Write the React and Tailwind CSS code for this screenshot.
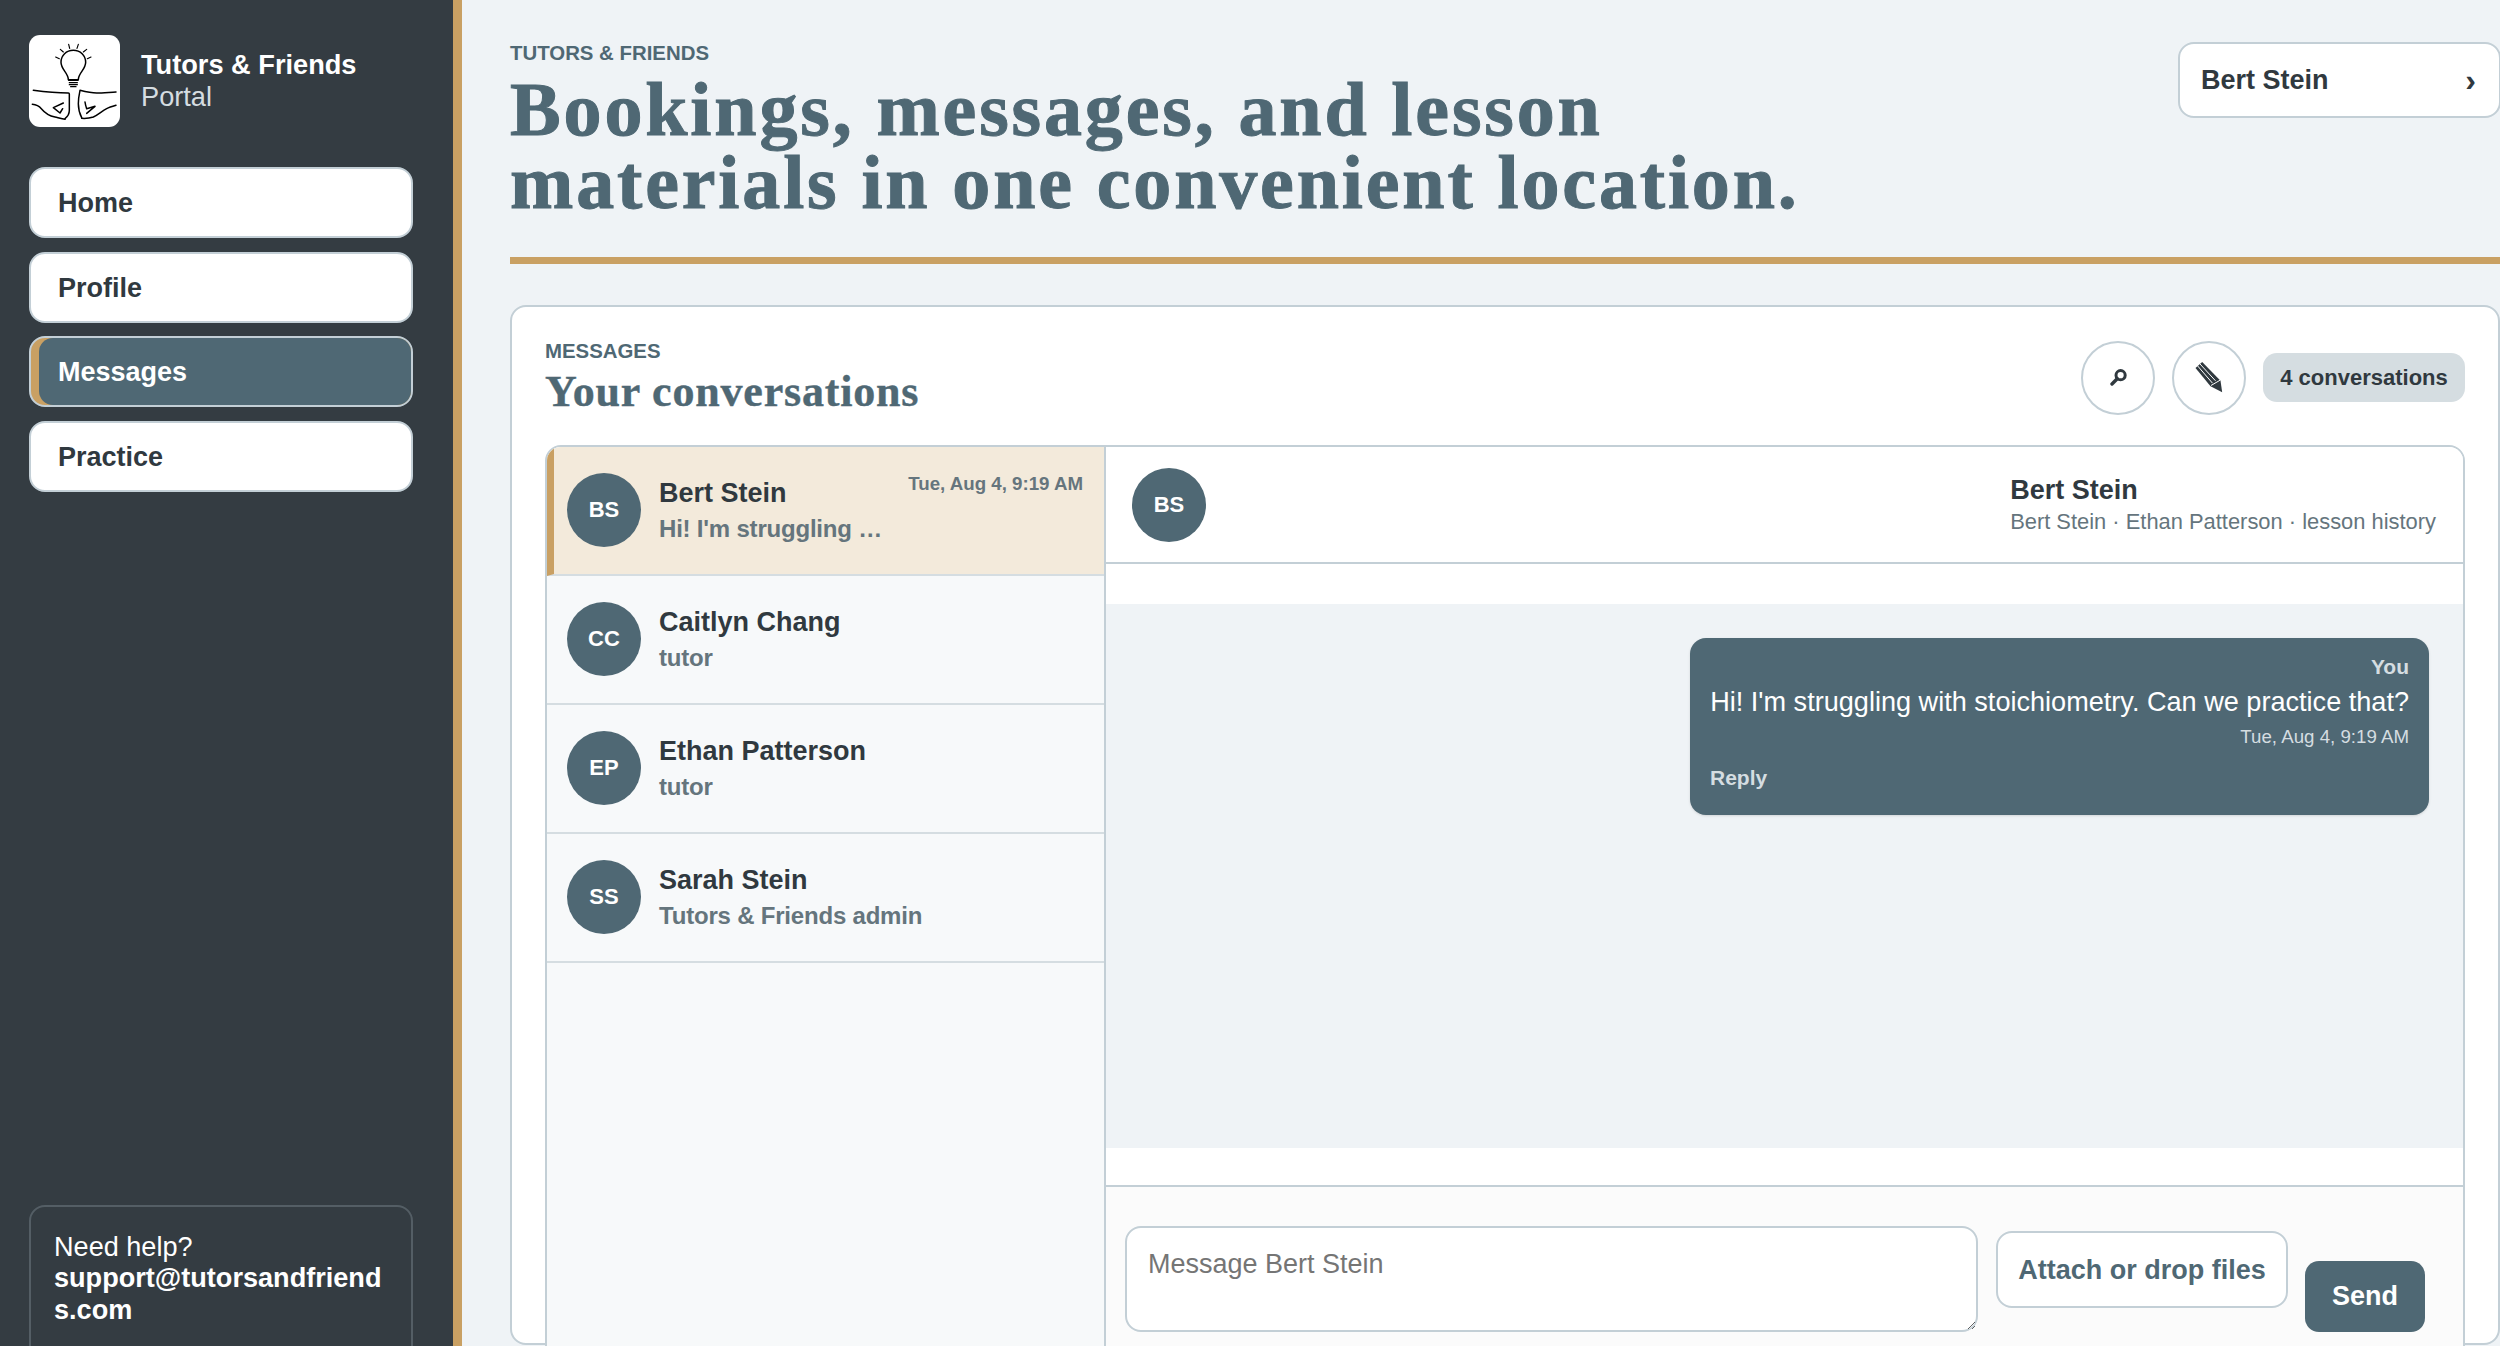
const SANS = "font-['Liberation_Sans',Arial,sans-serif]";

function Logo() {
  return (
    <div className="w-[91px] h-[92px] rounded-[11px] bg-white shrink-0 overflow-hidden">
      <svg viewBox="0 0 273 276" className="w-full h-full" fill="none" stroke="#000" strokeWidth="4.5" strokeLinecap="round" strokeLinejoin="round">
        <path d="M80 66l11 5M94 43l9 8M119 28l3 12M148 28l-4 12M173 43l-10 8M186 66l-11 5" strokeWidth="3.5" />
        <path d="M118 134c0-20-22-30-22-52 0-20 16-36 37-36s37 16 37 36c0 22-22 32-22 52z" />
        <path d="M119 136h28M121 143h24M121 149h24M125 155h16" strokeWidth="4" />
        <path d="M13 166c30 4 70 8 105 8 2 0 3 1 3 3v49c0 10-5 19-13 25" />
        <path d="M10 208c12 1 21 6 27 13 10 12 26 22 41 25 12 3 22 6 30 7" />
        <path d="M103 204L73 218l20 16 8-13" />
        <path d="M261 171c-20 1-42 3-58 3-16 0-34-4-50-8-3 14-5 28-5 40 0 16 4 30 10 42" />
        <path d="M158 250c14 1 26-1 35-4 14-6 26-18 40-25 8-4 18-7 28-10" />
        <path d="M168 201c1 8 3 14 5 20l25-7-25 21" />
      </svg>
    </div>
  );
}

function NavItem({ label, active }) {
  if (active) {
    return (
      <div className="h-[71px] rounded-[16px] border-2 border-[#c3cfd6] bg-[#c9a063] overflow-hidden">
        <div className="h-full ml-[8px] rounded-l-[14px] bg-[#4f6874] flex items-center pl-[19px] pt-[2px] text-[27px] font-bold text-white">{label}</div>
      </div>
    );
  }
  return (
    <div className="h-[71px] rounded-[16px] border-2 border-[#c3cfd6] bg-white flex items-center pl-[27px] pt-[2px] text-[27px] font-bold text-[#30393f]">{label}</div>
  );
}

function Avatar({ text }) {
  return (
    <div className="w-[74px] h-[74px] rounded-full bg-[#4f6874] text-white flex items-center justify-center text-[22px] font-bold shrink-0">{text}</div>
  );
}

function Conv({ initials, name, sub, date, active }) {
  return (
    <div className={`h-[129px] border-b-2 border-[#d5dde1] flex items-center relative ${active ? "bg-[#f3eadb] border-l-[7px] border-l-[#c9a063] pl-[13px]" : "bg-[#f7f9fa] pl-[20px]"} pr-[21px] pb-[2px]`}>
      <Avatar text={initials} />
      <div className="ml-[18px] min-w-0 pt-[3px]">
        <div className="text-[27px] font-bold text-[#30393f] leading-[34px]">{name}</div>
        <div className="text-[24px] font-bold text-[#65757d] leading-[34px] mt-[2px] tracking-[-0.2px]">{sub}</div>
      </div>
      {date && <div className="absolute right-[21px] top-[25px] text-[18.7px] font-bold text-[#65757d] leading-[24px]">{date}</div>}
    </div>
  );
}

function IconCircle({ children }) {
  return (
    <div className="w-[74px] h-[74px] rounded-full border-2 border-[#c3cfd6] bg-white flex items-center justify-center">{children}</div>
  );
}

export default function App() {
  return (
    <div className={`h-[1346px] w-[2500px] overflow-hidden flex bg-[#eff3f6] ${SANS}`}>
      <aside className="w-[462px] h-[1346px] shrink-0 overflow-hidden bg-[#343c42] border-r-[9px] border-r-[#c9a063]">
        <div className="h-[1376px] flex flex-col pl-[29px] pr-[40px] pt-[35px]">
          <div className="flex items-center gap-[21px]">
            <Logo />
            <div className="text-[27.2px] leading-[32px]">
              <div className="font-bold text-white">Tutors &amp; Friends</div>
              <div className="text-[#d5dde1]">Portal</div>
            </div>
          </div>
          <nav className="mt-[40px] flex flex-col gap-[13.5px]">
            <NavItem label="Home" />
            <NavItem label="Profile" />
            <NavItem label="Messages" active />
            <NavItem label="Practice" />
          </nav>
          <div className="mt-auto h-[171px] rounded-[16px] border-2 border-[#545e65] pl-[23px] pr-[18px] pt-[24px] text-[27.1px] leading-[32px] text-white break-all">
            <div>Need help?</div>
            <div className="font-bold -mt-[1px]">support@tutorsandfriends.com</div>
          </div>
        </div>
      </aside>

      <main className="flex-1 min-w-0 pl-[48px] overflow-hidden">
        <header className="flex items-start justify-between h-[257px] pt-[42px]">
          <div>
            <div className="text-[20.4px] font-bold leading-[24px] -mt-[1px] text-[#4f6874] uppercase">Tutors &amp; Friends</div>
            <h1 className="mt-[8px] font-['Liberation_Serif',Georgia,serif] font-bold text-[76px] leading-[73px] tracking-[2.85px] [-webkit-text-stroke:1px_#4f6874] text-[#4f6874]">
              Bookings, messages, and lesson<br />materials in one convenient location.
            </h1>
          </div>
          <div className="w-[323px] h-[76px] rounded-[16px] border-2 border-[#c3cfd6] bg-white flex items-center justify-between pl-[21px] pr-[23px] text-[27px] font-bold text-[#30393f] -mr-[1px] shrink-0">
            <span>Bert Stein</span>
            <span className="text-[32px] leading-none">›</span>
          </div>
        </header>
        <div className="h-[7px] bg-[#c9a063]" />

        <section className="mt-[41px] h-[1040px] rounded-[16px] border-2 border-[#c3cfd6] bg-white px-[33px] pt-[34px]">
          <div className="flex items-center justify-between h-[73px]">
            <div>
              <div className="text-[20.4px] font-bold leading-[24px] text-[#4f6874] uppercase">Messages</div>
              <h2 className="font-['Liberation_Serif',Georgia,serif] font-bold text-[44px] leading-[50px] mt-[4px] tracking-[0.8px] [-webkit-text-stroke:0.4px_#4f6874] text-[#4f6874]">Your conversations</h2>
            </div>
            <div className="flex items-center">
              <IconCircle>
                <svg width="17" height="17" viewBox="0 0 17 17" fill="none" stroke="#30393f" strokeWidth="3">
                  <circle cx="10.6" cy="6.2" r="4.6" />
                  <path d="M7.2 9.8L2 15" strokeLinecap="round" strokeWidth="3.4" />
                </svg>
              </IconCircle>
              <div className="w-[17px]" />
              <IconCircle>
                <svg width="28" height="31" viewBox="0 0 27 31" fill="none">
                  <path d="M0 6L6.7 0 25 18.7l1.7 11.6L15 24.3z" fill="#30393f" />
                  <path d="M2.2 4L17 21.2M4.5 2L20 18.8" stroke="#fff" strokeWidth="1" />
                  <path d="M15.5 23.5L24.6 18.2" stroke="#fff" strokeWidth="1" />
                </svg>
              </IconCircle>
              <div className="w-[17px]" />
              <div className="h-[49px] w-[202px] rounded-[14px] bg-[#d5dde1] flex items-center justify-center text-[22px] font-bold text-[#30393f]">4 conversations</div>
            </div>
          </div>

          <div className="mt-[31px] h-[1000px] rounded-t-[16px] border-2 border-[#c3cfd6] flex overflow-hidden">
            <div className="w-[559px] shrink-0 border-r-2 border-[#c3cfd6] bg-[#f7f9fa]">
              <Conv initials="BS" name="Bert Stein" sub="Hi! I'm struggling …" date="Tue, Aug 4, 9:19 AM" active />
              <Conv initials="CC" name="Caitlyn Chang" sub="tutor" />
              <Conv initials="EP" name="Ethan Patterson" sub="tutor" />
              <Conv initials="SS" name="Sarah Stein" sub="Tutors &amp; Friends admin" />
            </div>
            <div className="flex-1 min-w-0 flex flex-col bg-white">
              <div className="h-[117px] shrink-0 border-b-2 border-[#c3cfd6] flex items-center justify-between pl-[26px] pr-[27px]">
                <Avatar text="BS" />
                <div className="pt-[1px]">
                  <div className="text-[27px] font-bold leading-[32px] text-[#30393f]">Bert Stein</div>
                  <div className="text-[21.9px] leading-[30px] pt-[1px] text-[#65757d]">Bert Stein · Ethan Patterson · lesson history</div>
                </div>
              </div>
              <div className="mt-[40px] h-[544px] shrink-0 bg-[#eff3f6] pt-[34px] pr-[34px] flex justify-end items-start">
                <div className="rounded-[16px] bg-[#4f6874] w-[739px] h-[177px] px-[20px] pt-[16px] shadow-sm">
                  <div className="text-right text-[21px] font-bold leading-[26px] text-[#d5dde1]">You</div>
                  <div className="text-right text-[27.1px] leading-[34px] mt-[5px] text-white whitespace-nowrap">Hi! I'm struggling with stoichiometry. Can we practice that?</div>
                  <div className="text-right text-[18.7px] leading-[24px] mt-[6px] text-[#d5dde1]">Tue, Aug 4, 9:19 AM</div>
                  <div className="text-[21px] font-bold leading-[26px] mt-[16px] text-[#d5dde1]">Reply</div>
                </div>
              </div>
              <div className="mt-[37px] flex-1 border-t-2 border-[#c3cfd6] bg-[#fbfbfb] flex items-start pl-[19px] pt-[39px]">
                <textarea
                  placeholder="Message Bert Stein"
                  className="w-[853px] h-[106px] rounded-[16px] border-2 border-[#c3cfd6] bg-white px-[21px] pt-[20px] pb-[12px] text-[27px] leading-[32px] shrink-0 placeholder:text-[#757575]"
                />
                <div className="ml-[18px] mt-[5px] w-[292px] h-[77px] rounded-[16px] border-2 border-[#c3cfd6] bg-white flex items-center justify-center pt-[2px] text-[27px] font-bold text-[#4f6874] shrink-0">Attach or drop files</div>
                <div className="ml-[17px] mt-[35px] w-[120px] h-[71px] rounded-[14px] bg-[#4f6874] flex items-center justify-center text-[27px] font-bold text-white shrink-0">Send</div>
              </div>
            </div>
          </div>
        </section>
      </main>
    </div>
  );
}
